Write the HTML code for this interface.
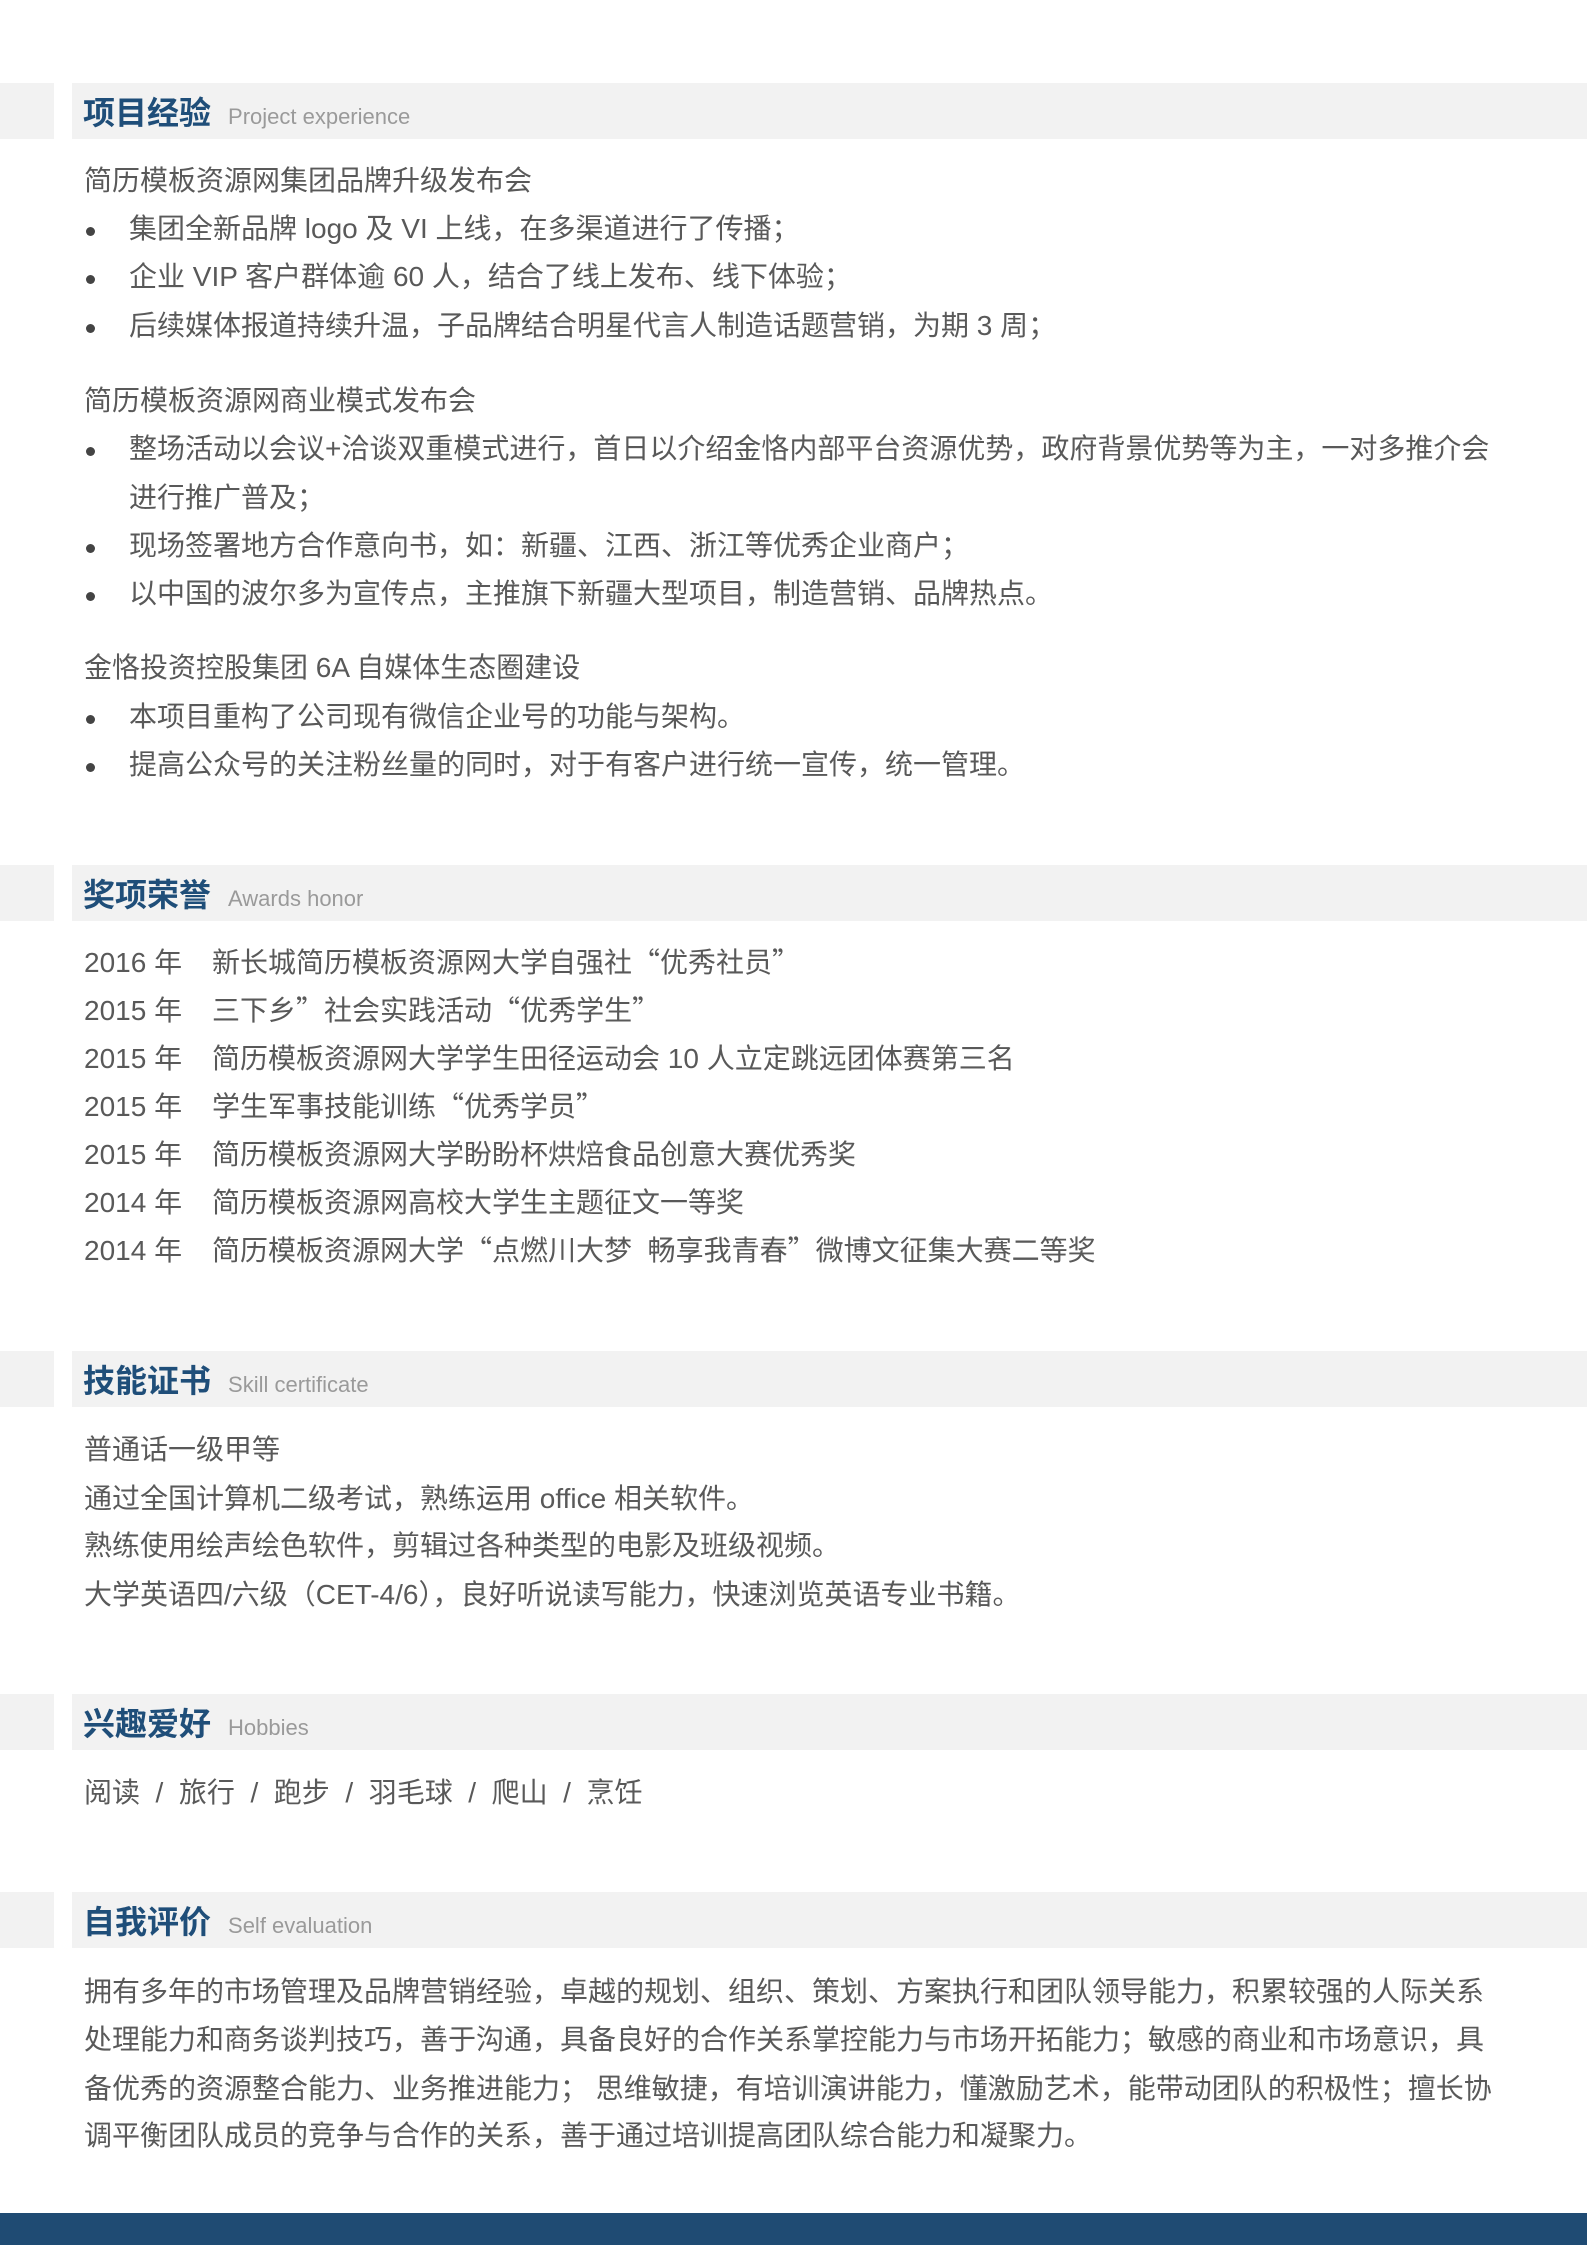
<!DOCTYPE html>
<html><head><meta charset="utf-8"><style>
html,body{margin:0;padding:0;background:#fff;}
body{width:1587px;height:2245px;position:relative;overflow:hidden;font-family:"Liberation Sans","Noto Sans CJK SC",sans-serif;color:#595959;}
.gl{position:absolute;left:0;width:54px;height:56px;background:#f2f2f2;}
.bar{position:absolute;left:72px;right:0;height:56px;background:#f2f2f2;}
.tt{position:absolute;left:83px;font-size:32px;font-weight:bold;color:#1f4e79;line-height:56px;margin-top:2px;}
.en{font-size:22px;font-weight:normal;color:#9a9a9a;margin-left:17px;}
.l{position:absolute;left:84px;font-size:28px;line-height:48px;height:48px;white-space:nowrap;margin-top:1px;}
.b{left:129px;}
.b:before{content:"";position:absolute;left:-43px;top:22px;width:9px;height:9px;border-radius:50%;background:#444;}
.y{display:inline-block;width:128px;}
.q{font-family:"Noto Sans CJK SC",sans-serif;line-height:0;}
.foot{position:absolute;left:0;right:0;top:2213px;height:32px;background:#1f4b73;}
</style></head><body>

<div class="gl" style="top:83px"></div><div class="bar" style="top:83px"></div>
<div class="tt" style="top:83px">项目经验<span class="en">Project experience</span></div>
<div class="l" style="top:156px">简历模板资源网集团品牌升级发布会</div>
<div class="l b" style="top:204px">集团全新品牌 logo 及 VI 上线，在多渠道进行了传播；</div>
<div class="l b" style="top:252px">企业 VIP 客户群体逾 60 人，结合了线上发布、线下体验；</div>
<div class="l b" style="top:301px">后续媒体报道持续升温，子品牌结合明星代言人制造话题营销，为期 3 周；</div>
<div class="l" style="top:376px">简历模板资源网商业模式发布会</div>
<div class="l b" style="top:424px">整场活动以会议+洽谈双重模式进行，首日以介绍金恪内部平台资源优势，政府背景优势等为主，一对多推介会</div>
<div class="l" style="top:473px;left:129px">进行推广普及；</div>
<div class="l b" style="top:521px">现场签署地方合作意向书，如：新疆、江西、浙江等优秀企业商户；</div>
<div class="l b" style="top:569px">以中国的波尔多为宣传点，主推旗下新疆大型项目，制造营销、品牌热点。</div>
<div class="l" style="top:643px">金恪投资控股集团 6A 自媒体生态圈建设</div>
<div class="l b" style="top:692px">本项目重构了公司现有微信企业号的功能与架构。</div>
<div class="l b" style="top:740px">提高公众号的关注粉丝量的同时，对于有客户进行统一宣传，统一管理。</div>

<div class="gl" style="top:865px"></div><div class="bar" style="top:865px"></div>
<div class="tt" style="top:865px">奖项荣誉<span class="en">Awards honor</span></div>
<div class="l" style="top:938px"><span class="y">2016 年</span>新长城简历模板资源网大学自强社<span class="q">“</span>优秀社员<span class="q">”</span></div>
<div class="l" style="top:986px"><span class="y">2015 年</span>三下乡<span class="q">”</span>社会实践活动<span class="q">“</span>优秀学生<span class="q">”</span></div>
<div class="l" style="top:1034px"><span class="y">2015 年</span>简历模板资源网大学学生田径运动会 10 人立定跳远团体赛第三名</div>
<div class="l" style="top:1082px"><span class="y">2015 年</span>学生军事技能训练<span class="q">“</span>优秀学员<span class="q">”</span></div>
<div class="l" style="top:1130px"><span class="y">2015 年</span>简历模板资源网大学盼盼杯烘焙食品创意大赛优秀奖</div>
<div class="l" style="top:1178px"><span class="y">2014 年</span>简历模板资源网高校大学生主题征文一等奖</div>
<div class="l" style="top:1226px"><span class="y">2014 年</span>简历模板资源网大学<span class="q">“</span>点燃川大梦&nbsp;&nbsp;畅享我青春<span class="q">”</span>微博文征集大赛二等奖</div>

<div class="gl" style="top:1351px"></div><div class="bar" style="top:1351px"></div>
<div class="tt" style="top:1351px">技能证书<span class="en">Skill certificate</span></div>
<div class="l" style="top:1425px">普通话一级甲等</div>
<div class="l" style="top:1474px">通过全国计算机二级考试，熟练运用 office 相关软件。</div>
<div class="l" style="top:1521px">熟练使用绘声绘色软件，剪辑过各种类型的电影及班级视频。</div>
<div class="l" style="top:1570px">大学英语四/六级（CET-4/6），良好听说读写能力，快速浏览英语专业书籍。</div>

<div class="gl" style="top:1694px"></div><div class="bar" style="top:1694px"></div>
<div class="tt" style="top:1694px">兴趣爱好<span class="en">Hobbies</span></div>
<div class="l" style="top:1768px">阅读&nbsp; /&nbsp; 旅行&nbsp; /&nbsp; 跑步&nbsp; /&nbsp; 羽毛球&nbsp; /&nbsp; 爬山&nbsp; /&nbsp; 烹饪</div>

<div class="gl" style="top:1892px"></div><div class="bar" style="top:1892px"></div>
<div class="tt" style="top:1892px">自我评价<span class="en">Self evaluation</span></div>
<div class="l" style="top:1967px">拥有多年的市场管理及品牌营销经验，卓越的规划、组织、策划、方案执行和团队领导能力，积累较强的人际关系</div>
<div class="l" style="top:2015px">处理能力和商务谈判技巧，善于沟通，具备良好的合作关系掌控能力与市场开拓能力；敏感的商业和市场意识，具</div>
<div class="l" style="top:2064px">备优秀的资源整合能力、业务推进能力；&nbsp;思维敏捷，有培训演讲能力，懂激励艺术，能带动团队的积极性；擅长协</div>
<div class="l" style="top:2111px">调平衡团队成员的竞争与合作的关系，善于通过培训提高团队综合能力和凝聚力。</div>

<div class="foot"></div>
</body></html>
